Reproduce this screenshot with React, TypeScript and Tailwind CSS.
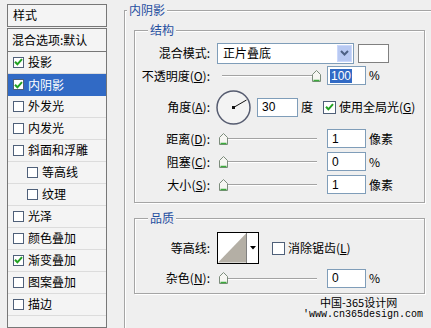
import React from "react";

const BG = "bg-[#efefef]";

const U = ({ c }: { c: string }) => <span className="underline">{c}</span>;

const Check = ({ on, small }: { on?: boolean; small?: boolean }) => (
  <span
    className={`flex items-center justify-center border border-[#4f6079] bg-white shrink-0 ${
      small ? "w-[11px] h-[11px]" : "w-[13px] h-[13px]"
    }`}
  >
    {on && (
      <svg width="9" height="8" viewBox="0 0 9 8">
        <path d="M1 3.8 L3.4 6.3 L8 1.2" fill="none" stroke="#21a121" strokeWidth="2" />
      </svg>
    )}
  </span>
);

const Thumb = () => (
  <svg width="9" height="12" viewBox="0 0 9 12" className="shrink-0">
    <path d="M0.5 11.5 V4.5 L4.5 0.5 L8.5 4.5 V11.5 Z" fill="#f6f6f2" stroke="#7c8c7c" />
    <path d="M1.5 10.5 H7.5" stroke="#3caa3c" strokeWidth="1.5" />
  </svg>
);

const Track = () => <div className="flex-1 h-[1px] bg-[#a3a3a3] shadow-[0_1px_0_#ffffff]" />;

const Slider = ({ full }: { full?: boolean }) => (
  <div className="ml-[9px] w-[102px] flex items-center">
    {full ? (
      <>
        <div className="w-[3px]" />
        <Track />
        <Thumb />
      </>
    ) : (
      <>
        <Thumb />
        <Track />
        <div className="w-[4px]" />
      </>
    )}
  </div>
);

const Field = ({ children, wide }: { children: React.ReactNode; wide?: boolean }) => (
  <div
    className={`${wide ? "w-[41px]" : "w-[39px]"} h-[19px] bg-white border border-[#7f9db9] flex items-center pl-[4px] font-['Liberation_Sans',sans-serif] text-[12px] leading-none`}
  >
    {children}
  </div>
);

const Label = ({ children }: { children: React.ReactNode }) => (
  <div className="w-[75px] text-right whitespace-nowrap">{children}</div>
);

const Legend = ({ text, indent }: { text: string; indent?: boolean }) => (
  <div
    className={`h-[14px] -mt-[8px] -mb-[6px] ${indent ? "ml-[13px]" : "ml-[2px]"} px-[2px] w-fit ${BG} text-[#1f4e9f] leading-[14px]`}
  >
    {text}
  </div>
);

const Dial = () => (
  <svg width="36" height="37" viewBox="0 0 36 37" className="ml-[6px] shrink-0">
    <circle cx="17.5" cy="18.5" r="16.5" fill="#f3f3f3" stroke="#565c70" strokeWidth="1.5" />
    <line x1="17.5" y1="18.5" x2="30.5" y2="11" stroke="#111" strokeWidth="1" />
    <rect x="16" y="17" width="3" height="3" fill="#111" />
  </svg>
);

const rows: { t: string; on?: boolean; sub?: boolean; sel?: boolean }[] = [
  { t: "投影", on: true },
  { t: "内阴影", on: true, sel: true },
  { t: "外发光" },
  { t: "内发光" },
  { t: "斜面和浮雕" },
  { t: "等高线", sub: true },
  { t: "纹理", sub: true },
  { t: "光泽" },
  { t: "颜色叠加" },
  { t: "渐变叠加", on: true },
  { t: "图案叠加" },
  { t: "描边" },
];

export default function App() {
  return (
    <div
      className={`w-[431px] h-[328px] ${BG} overflow-hidden flex font-['Noto_Sans_CJK_SC',sans-serif] text-[12px] text-black leading-none`}
    >
      {/* style list */}
      <div className="ml-[7px] mt-[4px] w-[100px] flex flex-col shrink-0">
        <div className="h-[25px] border border-[#777] bg-[#f4f4f4] flex items-center pl-[5px]">样式</div>
        <div className="mt-[1px] border border-[#777] bg-[#f4f4f4] flex flex-col h-[330px]">
          <div className="h-[23px] border-b border-[#777] flex items-center pl-[4px] whitespace-nowrap">
            混合选项:默认
          </div>
          {rows.map((r, i) => (
            <div
              key={r.t}
              className={`${i === 0 ? "h-[22px]" : "h-[22px]"} flex items-center gap-[4px] ${
                r.sub ? "pl-[19px]" : "pl-[5px]"
              } ${r.sel ? "bg-[#316ac5] text-white" : "border-b border-[#dcdcdc]"}`}
            >
              <Check on={r.on} small />
              <span>{r.t}</span>
            </div>
          ))}
        </div>
      </div>

      {/* inner shadow group */}
      <div className="mt-[10px] ml-[17px] w-[330px] h-[340px] border border-[#a5a5a5] shadow-[inset_1px_1px_0_#ffffff] shrink-0 flex flex-col">
        <Legend text="内阴影" />

        {/* structure */}
        <div className="mt-[19px] ml-[9px] w-[291px] h-[173px] border border-[#a5a5a5] shadow-[inset_1px_1px_0_#ffffff,1px_1px_0_#ffffff] flex flex-col">
          <Legend text="结构" indent />
          <div className="pt-[11px] flex flex-col">
            <div className="h-[22px] flex items-center">
              <Label>混合模式:</Label>
              <div className="ml-[7px] w-[137px] h-[21px] bg-white border border-[#7f9db9] flex items-center">
                <span className="ml-[5px] flex-1">正片叠底</span>
                <div className="mr-[1px] w-[15px] h-[17px] bg-[#b8c9f2] border border-[#cbd8fb] flex items-center justify-center">
                  <svg width="9" height="6" viewBox="0 0 9 6">
                    <path d="M1 1 L4.5 4.5 L8 1" fill="none" stroke="#4d6185" strokeWidth="2" />
                  </svg>
                </div>
              </div>
              <div className="ml-[4px] w-[31px] h-[19px] bg-white border border-[#808080]" />
            </div>

            <div className="h-[23px] flex items-center">
              <Label>
                不透明度(<U c="O" />):
              </Label>
              <Slider full />
              <div className="ml-[6px]">
                <Field>
                  <span className="bg-[#316ac5] text-white px-[1px] py-[1px] -ml-[2px]">100</span>
                </Field>
              </div>
              <span className="ml-[3px] font-['Liberation_Sans',sans-serif]">%</span>
            </div>

            <div className="h-[40px] flex items-center">
              <Label>
                角度(<U c="A" />):
              </Label>
              <Dial />
              <div className="ml-[5px]">
                <Field wide>30</Field>
              </div>
              <span className="ml-[3px]">度</span>
              <div className="ml-[10px]">
                <Check on />
              </div>
              <span className="ml-[3px] whitespace-nowrap">
                使用全局光(<U c="G" />)
              </span>
            </div>

            {[
              { l: "距离", k: "D", v: "1", u: "像素" },
              { l: "阻塞", k: "C", v: "0", u: "%" },
              { l: "大小", k: "S", v: "1", u: "像素" },
            ].map((r) => (
              <div key={r.l} className="h-[23px] flex items-center">
                <Label>
                  {r.l}(<U c={r.k} />):
                </Label>
                <Slider />
                <div className="ml-[6px]">
                  <Field>{r.v}</Field>
                </div>
                <span className="ml-[3px]">{r.u}</span>
              </div>
            ))}
          </div>
        </div>

        {/* quality */}
        <div className="mt-[15px] ml-[9px] w-[291px] h-[76px] border border-[#a5a5a5] shadow-[inset_1px_1px_0_#ffffff,1px_1px_0_#ffffff] flex flex-col">
          <Legend text="品质" indent />
          <div className="pt-[13px] flex flex-col">
            <div className="h-[32px] flex items-center">
              <Label>等高线:</Label>
              <div className="ml-[7px] w-[42px] h-[32px] border border-black bg-white flex">
                <svg width="29" height="30" viewBox="0 0 29 30" className="shrink-0 border-r border-[#808080]">
                  <rect width="29" height="30" fill="#ffffff" />
                  <polygon points="0,30 29,0 29,30" fill="#b4afa5" />
                </svg>
                <div className="flex-1 flex items-center justify-center">
                  <svg width="6" height="4" viewBox="0 0 6 4">
                    <polygon points="0,0 6,0 3,3.5" fill="#000" />
                  </svg>
                </div>
              </div>
              <div className="ml-[13px]">
                <Check />
              </div>
              <span className="ml-[3px] whitespace-nowrap">
                消除锯齿(<U c="L" />)
              </span>
            </div>
            <div className="h-[28px] flex items-center">
              <Label>
                杂色(<U c="N" />):
              </Label>
              <Slider />
              <div className="ml-[6px]">
                <Field>0</Field>
              </div>
              <span className="ml-[3px]">%</span>
            </div>
          </div>
        </div>

        <div className="mt-[2px] ml-[195px] h-[13px] text-[11px] leading-[13px] whitespace-nowrap">中国-365设计网</div>
        <div className="ml-[178px] h-[12px] font-['Liberation_Mono',monospace] text-[10px] leading-[12px] whitespace-nowrap">
          'www.cn365design.com
        </div>
      </div>
    </div>
  );
}
